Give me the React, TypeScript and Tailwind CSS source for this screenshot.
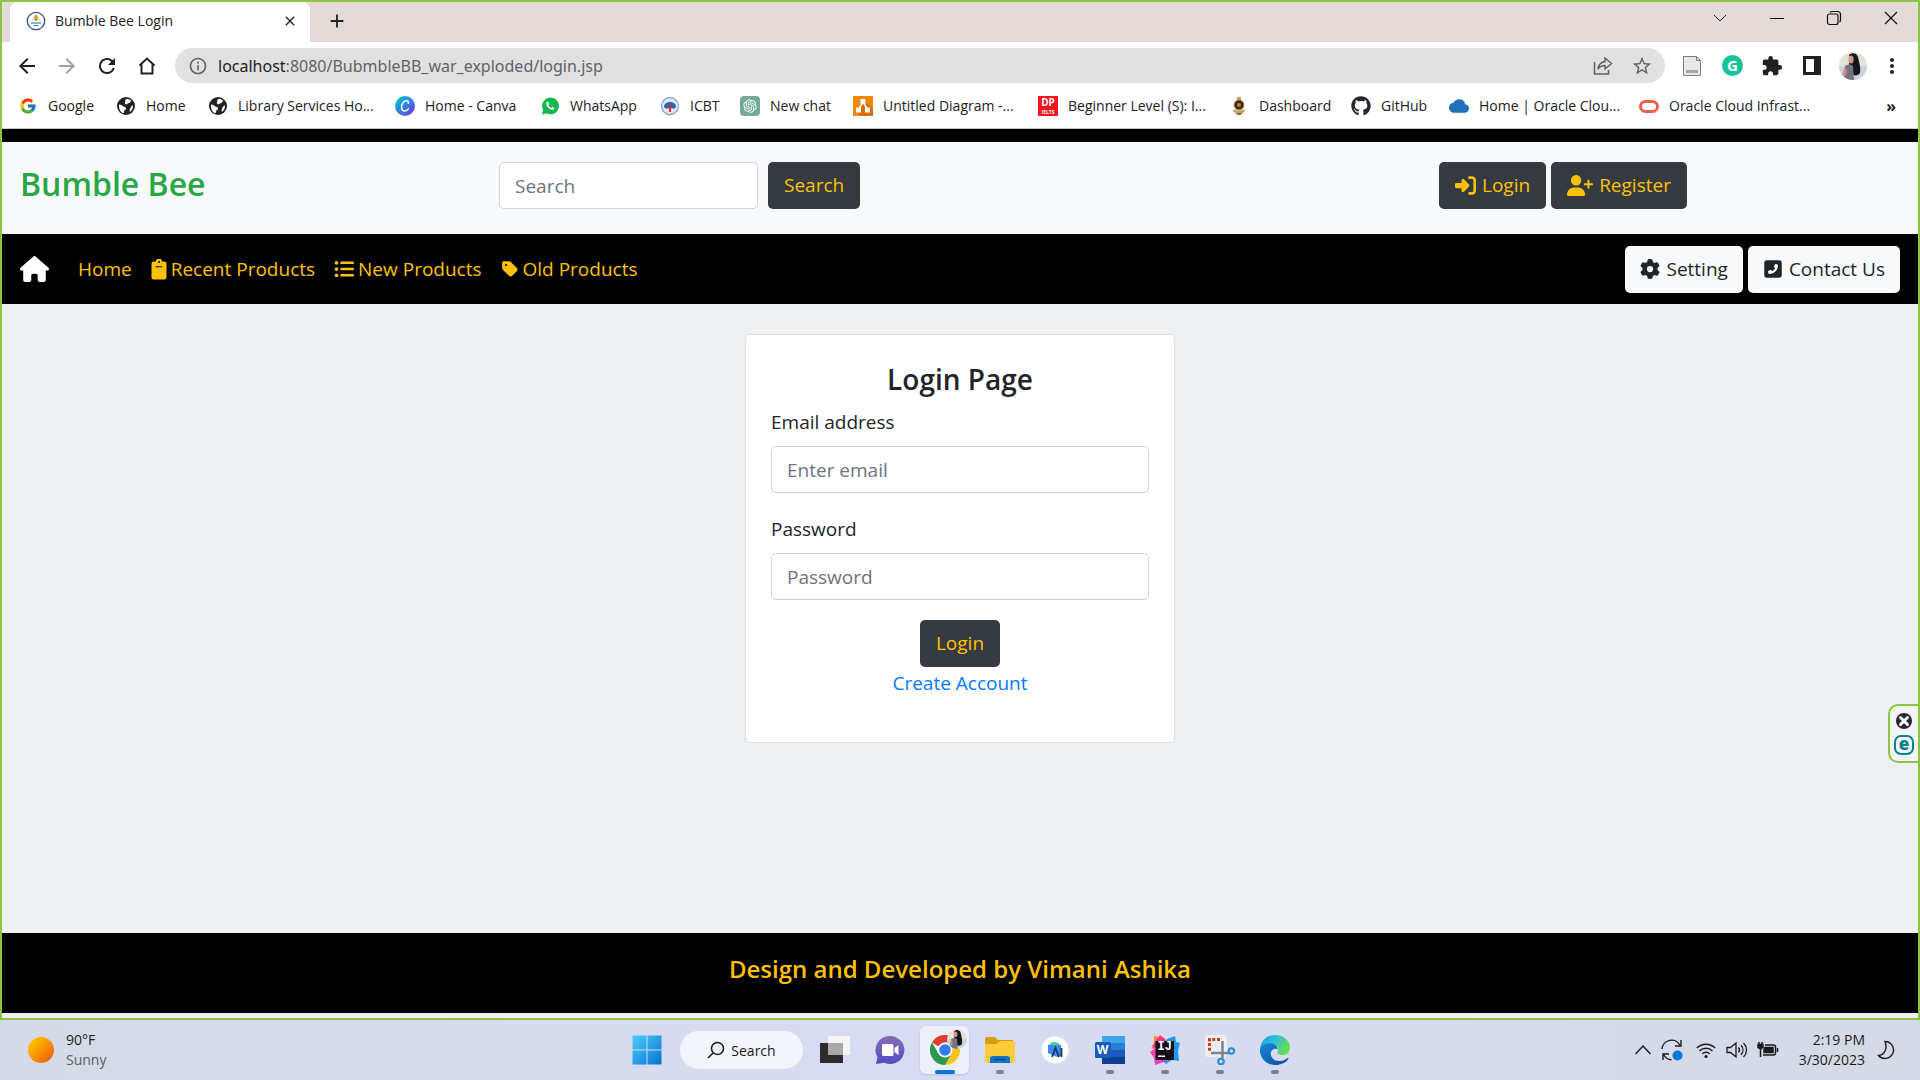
import React, { ReactNode } from "react";
import { FcGoogle } from "react-icons/fc";
import { FaHouse, FaRightToBracket, FaUserPlus, FaGear, FaSquarePhoneFlip, FaTag, FaListUl, FaGithub } from "react-icons/fa6";
import { MdArrowBack, MdArrowForward, MdRefresh, MdExtension, MdStarOutline, MdMoreVert, MdInfoOutline, MdCloud, MdClose, MdAdd } from "react-icons/md";
import { RiOpenaiFill } from "react-icons/ri";

function BeeIcon() {
  return (
    <svg viewBox="0 0 20 20" className="size-5 shrink-0">
      <circle cx="10" cy="10" r="8.7" fill="#fff" stroke="#3c4a78" strokeWidth="1.3" />
      <ellipse cx="10" cy="7" rx="1.8" ry="3.2" fill="#c9a227" />
      <path d="M5.5 9.5 9 7M14.5 9.5 11 7" stroke="#b9c3a0" />
      <path d="M5 12h10" stroke="#20b0b8" strokeWidth="1.4" />
      <path d="M7.5 14.5h5" stroke="#3c4a78" strokeWidth=".8" />
    </svg>
  );
}

function GlobeIcon() {
  return (
    <svg viewBox="0 0 20 20" className="size-5">
      <circle cx="10" cy="10" r="9" fill="#202124" />
      <path d="M3 8.5c2 .2 3 .8 4 1.8 1.200.8 2.500.5 3 1.700.4 1.300-.8 2-1.600 2.600-.5.700-.2 1.900-.9 2.700C4.700 16.500 2.700 13.500 3 8.500z" fill="#fff" />
      <path d="M9.500 3.500c2-1 4.500-.2 6 1.500-1 .2-1.500.8-1.500 1.700-.8.500-2 .2-2.500 1-.6.900-2.300.7-2.600-.4C8.700 6 9.700 5 9.500 3.500zM16.800 9c.6 3-.8 5.800-3 7 .2-1.500-.6-2.200.2-3.400.800-1 1.300-2.700 2.800-3.600z" fill="#fff" />
    </svg>
  );
}

function CanvaIcon() {
  return (
    <svg viewBox="0 0 20 20" className="size-5">
      <defs>
        <linearGradient id="canva" x1="0" y1="0" x2="1" y2="1">
          <stop offset="0.1" stopColor="#00c4cc" />
          <stop offset="0.55" stopColor="#3a78e6" />
          <stop offset="1" stopColor="#7d2ae8" />
        </linearGradient>
      </defs>
      <circle cx="10" cy="10" r="10" fill="url(#canva)" />
      <path d="M13.300 7.200c.6-1.700-.5-2.800-2.200-2.500-2.600.5-4.500 3.400-4.500 6.200 0 2.600 1.300 4.100 3.200 4.100 1.500 0 2.900-.9 3.700-2.300" fill="none" stroke="#fff" strokeWidth="1.500" strokeLinecap="round" />
    </svg>
  );
}

function WhatsAppIcon() {
  return (
    <svg viewBox="0 0 20 20" className="size-5">
      <path d="M2 18.500 3.200 14A8.400 8.400 0 1 1 6.500 17.300z" fill="#12b84b" />
      <path d="M7.400 5.500c-1 .4-1.500 1.500-1.200 2.700.7 2.700 2.900 4.900 5.700 5.600 1.300.3 2.500-.5 2.600-1.800l-2.200-1.200-1 1.100c-1.400-.6-2.400-1.600-3-3l.9-1-1-2.300z" fill="#fff" />
    </svg>
  );
}

function IcbtIcon() {
  return (
    <svg viewBox="0 0 20 20" className="size-5">
      <circle cx="10" cy="10" r="8.500" fill="#dfe8f3" stroke="#8fa6c4" strokeWidth="1.300" />
      <path d="M4 11c0-3.500 3-5 6-5s6 1.500 6 5l-2 2-2-1-2 1-2-1-2 1z" fill="#2867b5" />
      <path d="M7.500 9.500h5V12h-1.500v4H9v-4H7.500z" fill="#cf2936" />
    </svg>
  );
}

function DiagramIcon() {
  return (
    <svg viewBox="0 0 20 20" className="size-5">
      <path d="M0 0h20v20H0z" fill="#f08705" />
      <path d="m11 5 9 8v7H8l-5-4z" fill="#df6c0c" />
      <path d="M10 6 5.500 13.500M10 6l4.500 7.500" stroke="#fff" strokeWidth="1.500" />
      <path d="M7.500 3h5v5h-5zM3 11.500h5v5H3zM12 11.500h5v5h-5z" fill="#fff" />
    </svg>
  );
}

function CrestIcon() {
  return (
    <svg viewBox="0 0 20 20" className="size-5">
      <path d="M8 1h4v4H8zM5 13c2 2 8 2 10 0l1 2-3 3H7l-3-3z" fill="#c3a35c" />
      <circle cx="10" cy="9" r="4.800" fill="#42231b" stroke="#8f7448" />
      <circle cx="10" cy="9" r="2" fill="#b8862a" />
      <path d="M8 17h4v2H8z" fill="#7a6a50" />
    </svg>
  );
}

const bookmarks: { label: string; width: string; icon: ReactNode }[] = [
  { label: "Google", width: "w-[98px]", icon: <FcGoogle className="size-[18px]" /> },
  { label: "Home", width: "w-[92px]", icon: <GlobeIcon /> },
  { label: "Library Services Ho...", width: "w-[187px]", icon: <GlobeIcon /> },
  { label: "Home - Canva", width: "w-[145px]", icon: <CanvaIcon /> },
  { label: "WhatsApp", width: "w-[120px]", icon: <WhatsAppIcon /> },
  { label: "ICBT", width: "w-[80px]", icon: <IcbtIcon /> },
  {
    label: "New chat", width: "w-[113px]",
    icon: <span className="flex size-5 items-center justify-center rounded-sm bg-[#75a99c] text-white"><RiOpenaiFill className="size-4" /></span>,
  },
  { label: "Untitled Diagram -...", width: "w-[185px]", icon: <DiagramIcon /> },
  {
    label: "Beginner Level (S): I...", width: "w-[191px]",
    icon: (
      <span className="flex size-5 flex-col items-center justify-between bg-[#f5141b] font-bold text-white">
        <span className="text-[10px] leading-[12px]">DP</span>
        <span className="text-[5px] leading-[7px]">IELTS</span>
      </span>
    ),
  },
  { label: "Dashboard", width: "w-[122px]", icon: <CrestIcon /> },
  { label: "GitHub", width: "w-[98px]", icon: <FaGithub className="size-5 text-[#24292f]" /> },
  { label: "Home | Oracle Clou...", width: "w-[190px]", icon: <MdCloud className="size-5 text-[#2272b9]" /> },
  {
    label: "Oracle Cloud Infrast...", width: "w-[180px]",
    icon: <span className="h-[13px] w-5 rounded-full border-[3px] border-[#ee5f4b]" />,
  },
];

function Portrait({ className }: { className: string }) {
  return (
    <svg viewBox="0 0 28 28" className={className}>
      <defs>
        <clipPath id="face"><circle cx="14" cy="14" r="14" /></clipPath>
      </defs>
      <g clipPath="url(#face)">
        <path d="M0 0h28v28H0z" fill="#e4e2d6" />
        <path d="M0 14h28v14H0z" fill="#c8d5da" />
        <path d="M10 3c3-3 8-2 9 2 1 5 3 10 2 16-2 3-6 3-8 1L10 12z" fill="#16151b" />
        <path d="M6 14c3-2 6-2 8 0l1 14H4z" fill="#73747f" />
        <ellipse cx="12" cy="7.500" rx="2.600" ry="4" fill="#cf9a86" />
        <path d="m6 15-3 8 3 2 2-6z" fill="#c98f7b" />
      </g>
    </svg>
  );
}

function TabStrip() {
  return (
    <div className="flex h-10 items-start justify-between bg-[#e4dbd9]">
      <div className="flex h-full items-center pb-[2px]">
        <div className="mb-[-2px] ml-2 flex h-10 w-[300px] items-center rounded-t-lg bg-white pr-2 pb-[3px] pl-4">
          <BeeIcon />
          <span className="ml-[9px] grow text-[14px] text-[#202124]">Bumble Bee Login</span>
          <button aria-label="Close tab" className="p-1"><MdClose className="size-4 text-[#202124]" /></button>
        </div>
        <button aria-label="New tab" className="ml-4"><MdAdd className="size-[22px] text-[#202124]" /></button>
      </div>
      <div className="flex h-8 items-center gap-[37px] pr-[17px]">
        <button aria-label="Search tabs">
          <svg viewBox="0 0 20 20" className="size-5" fill="none" stroke="#202124"><path d="m4 7 6 6 6-6" /></svg>
        </button>
        <button aria-label="Minimize">
          <svg viewBox="0 0 20 20" className="size-5" stroke="#111"><path d="M3 10.500h14" /></svg>
        </button>
        <button aria-label="Restore">
          <svg viewBox="0 0 20 20" className="size-5" fill="none" stroke="#111" strokeWidth="1.200"><rect x="3.500" y="6" width="10.500" height="10.500" rx="2" /><path d="M6 4.500c.5-.7 1-1 2-1h5.500c2 0 3 1 3 3V12c0 1-.3 1.500-1 2" /></svg>
        </button>
        <button aria-label="Close">
          <svg viewBox="0 0 20 20" className="size-5" stroke="#111" strokeWidth="1.200"><path d="m4 4 12 12M16 4 4 16" /></svg>
        </button>
      </div>
    </div>
  );
}

function Toolbar() {
  return (
    <div className="flex h-[47px] items-center pr-[14px] pl-[13px] text-[#202124]">
      <div className="flex w-40 items-center gap-4">
        <button aria-label="Back"><MdArrowBack className="size-6" /></button>
        <button aria-label="Forward"><MdArrowForward className="size-6 text-[#a0a1a3]" /></button>
        <button aria-label="Reload"><MdRefresh className="size-6" /></button>
        <button aria-label="Home page">
          <svg viewBox="0 0 24 24" className="size-6" fill="none" stroke="currentColor" strokeWidth="2"><path d="M4.500 11.500 12 4.500l7.500 7M6.500 10.500V19.500h11V10.500" /></svg>
        </button>
      </div>
      <div className="flex h-[35px] grow items-center rounded-full bg-[#e1e1e1] pr-3 pl-[13px]">
        <MdInfoOutline className="size-5 text-[#5f6368]" />
        <span className="ml-[10px] grow font-['Noto_Sans','Open_Sans',sans-serif] text-[16px] text-[#5f6368]"><span className="text-[#202124]">localhost</span>:8080/BubmbleBB_war_exploded/login.jsp</span>
        <button aria-label="Share">
          <svg viewBox="0 0 22 22" className="size-[22px]" fill="none" stroke="#5f6368" strokeWidth="1.500"><path d="M2.500 7v12h14v-4M13 3l6.500 5.500L13 14v-3.500c-3 0-5 .8-7 3.500.7-4.500 3-7 7-7.500z" /></svg>
        </button>
        <button aria-label="Bookmark" className="ml-[17px]"><MdStarOutline className="size-[22px] text-[#5f6368]" /></button>
      </div>
      <div className="ml-4 flex items-center">
        <button aria-label="Document extension" className="mr-[19px]">
          <svg viewBox="0 0 22 22" className="size-[22px]"><path d="M2.500 1.500h13l4 4v15h-17z" fill="#e8e8e8" stroke="#7c7c7c" /><path d="M15.500 1.500v4h4" fill="none" stroke="#7c7c7c" /><path d="M5 15h12v3H5z" fill="#a8a8a8" /></svg>
        </button>
        <button aria-label="Grammarly" className="mr-[18px] size-[21px] rounded-full bg-[#15c39a] text-[15px] leading-[21px] font-bold text-white">G</button>
        <button aria-label="Extensions" className="mr-5"><MdExtension className="size-[22px]" /></button>
        <button aria-label="Side panel" className="mr-[18px] h-[19px] w-[18px] border-[3px] border-r-[7px] border-[#202124]" />
        <button aria-label="Profile" className="mr-[13px]"><Portrait className="size-7" /></button>
        <button aria-label="Menu"><MdMoreVert className="size-6" /></button>
      </div>
    </div>
  );
}

function Bookmarks() {
  return (
    <nav aria-label="Bookmarks" className="flex h-10 items-start border-b border-[#c8c8c8] pt-[7px] pl-4 text-[14px] leading-5 text-[#202124]">
      {bookmarks.map((b, i) => (
        <a key={i} href="#" className={`flex shrink-0 items-center gap-[10px] whitespace-nowrap ${b.width}`}>
          <span className="flex size-5 shrink-0 items-center justify-center">{b.icon}</span>
          {b.label}
        </a>
      ))}
      <button aria-label="More bookmarks" className="mr-[22px] ml-auto text-[16px] leading-5 font-bold">»</button>
    </nav>
  );
}

const darkButton = "flex h-[47px] items-center gap-[6px] rounded-[5px] bg-[#343a40] px-4 text-[19px] text-[#ffc107]";
const lightButton = "flex h-[47px] items-center gap-[6px] rounded-[5px] bg-[#f8f9fa] px-[15px] text-[19px] text-[#212529]";
const textBox = "h-[47px] rounded-[5px] border border-[#ced4da] bg-white px-[15px] text-[19px] text-[#495057] placeholder:text-[#6c757d]";

function ClipboardIcon() {
  return (
    <svg viewBox="0 0 16 21" className="h-[21px] w-4">
      <path d="M2.500 2.500H5a3 3 0 0 1 6 0h2.500A2 2 0 0 1 15.500 4.500v14a2 2 0 0 1-2 2h-11a2 2 0 0 1-2-2v-14a2 2 0 0 1 2-2z" fill="#ffc107" />
      <circle cx="8" cy="3" r="1" fill="#000" />
      <path d="M5 7.800h6" stroke="#000" strokeLinecap="round" />
    </svg>
  );
}

function SitePage() {
  return (
    <div className="flex grow flex-col bg-[#eff0f2]">
      <div className="h-[13px] bg-black" />
      <header className="flex h-[92px] items-start bg-[#f8f9fb] pt-5">
        <div className="w-1/4 pl-[18px]"><h3 className="text-[32px] leading-[44px] font-semibold text-[#28a745]">Bumble Bee</h3></div>
        <form className="flex w-1/2 gap-[10px] pl-[18px]">
          <input type="search" aria-label="Search" placeholder="Search" className={`w-[259px] ${textBox}`} />
          <button type="button" className={darkButton}>Search</button>
        </form>
        <div className="flex gap-[5px]">
          <a href="#" className={darkButton}><FaRightToBracket className="size-[21px]" />Login</a>
          <a href="#" className={darkButton}><FaUserPlus className="h-[21px] w-[26px]" />Register</a>
        </div>
      </header>
      <nav aria-label="Site" className="flex h-[70px] items-center bg-black pr-[18px] pl-[18px] text-[19px] text-[#ffc107]">
        <a href="#" aria-label="Start"><FaHouse className="h-[26px] w-[29px] text-white" /></a>
        <ul className="ml-[29px] flex gap-[19px]">
          <li><a href="#">Home</a></li>
          <li><a href="#" className="flex items-center gap-1"><ClipboardIcon />Recent Products</a></li>
          <li><a href="#" className="flex items-center gap-1"><FaListUl className="size-5" />New Products</a></li>
          <li><a href="#" className="flex items-center gap-1"><FaTag className="size-[18px]" />Old Products</a></li>
        </ul>
        <div className="ml-auto flex gap-[5px]">
          <button className={lightButton}><FaGear className="size-5" />Setting</button>
          <button className={lightButton}><FaSquarePhoneFlip className="size-5" />Contact Us</button>
        </div>
      </nav>
      <main className="flex grow justify-center pt-[30px]">
        <form className="flex h-[409px] w-[430px] flex-col self-start rounded-[5px] border border-[#dfdfdf] bg-white px-[25px] pt-[25px] text-[19px] text-[#212529]">
          <h4 className="mb-[10px] text-center text-[28px] leading-[38px] font-semibold">Login Page</h4>
          <label htmlFor="email" className="mb-[9px] leading-[29px]">Email address</label>
          <input id="email" type="email" placeholder="Enter email" className={textBox} />
          <label htmlFor="password" className="mt-[22px] mb-[9px] leading-[29px]">Password</label>
          <input id="password" type="password" placeholder="Password" className={textBox} />
          <div className="mt-5 flex flex-col items-center">
            <button type="button" className={darkButton}>Login</button>
            <a href="#" className="leading-8 text-[#007bff]">Create Account</a>
          </div>
        </form>
      </main>
      <footer className="mb-[5px] h-20 bg-black pt-[18px] text-center text-[24px] leading-9 font-semibold text-[#ffc107]">
        Design and Developed by Vimani Ashika
      </footer>
    </div>
  );
}

function SideWidget() {
  return (
    <div className="absolute top-[702px] -right-[2px] flex h-[59px] w-8 flex-col items-center gap-[5px] rounded-l-[10px] border-2 border-[#8cc640] bg-[#f3f4f5] pt-[6px]">
      <button aria-label="Dismiss">
        <svg viewBox="0 0 18 18" className="size-[18px]"><circle cx="9" cy="9" r="8" fill="#23282e" /><path d="m5.500 5.500 7 7M12.500 5.500l-7 7" stroke="#fff" strokeWidth="3" strokeLinecap="round" /></svg>
      </button>
      <button aria-label="Open assistant" className="flex size-5 items-center justify-center rounded-[7px] border-2 border-[#0b8290] text-[17px] leading-4 font-extrabold text-[#0b8290]"><span className="mb-[3px]">e</span></button>
    </div>
  );
}

function WindowsLogo() {
  return (
    <svg viewBox="0 0 30 30" className="size-[30px]">
      <defs><linearGradient id="win" gradientUnits="userSpaceOnUse" x1="0" y1="0" x2="30" y2="30"><stop stopColor="#4cd0fb" /><stop offset="1" stopColor="#0473d0" /></linearGradient></defs>
      <path d="M.5.5h14v14H.5zM15.500.5h14v14h-14zM.5 15.500h14v14H.5zM15.500 15.500h14v14h-14z" fill="url(#win)" />
    </svg>
  );
}

function TaskViewIcon() {
  return (
    <svg viewBox="0 0 30 30" className="size-[30px]">
      <path d="M0 8h23v20H0z" fill="#2b2b2b" />
      <path d="M8 1h22v19H8z" fill="#f5f5f5" />
      <path d="M8 8h15v12H8z" fill="#aaa" />
    </svg>
  );
}

function ChatIcon() {
  return (
    <svg viewBox="0 0 30 30" className="size-[30px]">
      <defs><linearGradient id="chat" x1="0" y1="0" x2="0" y2="1"><stop stopColor="#8a6bb8" /><stop offset="1" stopColor="#4d4fc4" /></linearGradient></defs>
      <path d="M15.500 1a14 14 0 1 1-6 26.700L1 29l1.500-7A14 14 0 0 1 15.500 1z" fill="url(#chat)" />
      <rect x="7" y="9" width="11.500" height="12" rx="1.500" fill="#fff" />
      <path d="m19.500 13 4-3v10l-4-3z" fill="#fff" />
    </svg>
  );
}

function ChromeIcon() {
  return (
    <svg viewBox="0 0 30 30" className="size-[30px]">
      <path d="M15 15 2 7.500A15 15 0 0 1 28 7.500H15z" fill="#e33b2e" />
      <path d="M15 7.500h13A15 15 0 0 1 15 30l6.500-11.200z" fill="#fcc31e" />
      <path d="M2 7.500A15 15 0 0 0 15 30l6.500-11.200L8.500 18.800z" fill="#269a4a" />
      <circle cx="15" cy="15" r="7.500" fill="#fff" />
      <circle cx="15" cy="15" r="5.800" fill="#2f7ded" />
    </svg>
  );
}

function FolderIcon() {
  return (
    <svg viewBox="0 0 30 30" className="size-[30px]">
      <path d="M0 4a2 2 0 0 1 2-2h8l3 3h15v6H0z" fill="#dc9a12" />
      <path d="M0 9h11l4-3h13a2 2 0 0 1 2 2v18a2 2 0 0 1-2 2H2a2 2 0 0 1-2-2z" fill="#fccc3e" />
      <path d="M5 28v-4a3 3 0 0 1 3-3h14a3 3 0 0 1 3 3v4z" fill="#1475c2" />
      <path d="M9 24.500h12" stroke="#0a4b85" strokeWidth="1.500" />
    </svg>
  );
}

function AndroidStudioIcon() {
  return (
    <svg viewBox="0 0 30 30" className="size-[30px]">
      <circle cx="15" cy="15" r="13.500" fill="#fff" />
      <path d="M9 10a6 5 0 0 1 11 0z" fill="#3ddc84" />
      <path d="M8 10h13v11l-4 1L8 18z" fill="#4285f4" />
      <path d="m12 22 3.500-9 3.500 9M21.500 13v9" stroke="#123b58" strokeWidth="1.800" fill="none" />
    </svg>
  );
}

function WordIcon() {
  return (
    <span className="relative block size-[30px]">
      <svg viewBox="0 0 30 30" className="size-[30px]">
        <path d="M7 1h23v7H7z" fill="#41a5ee" /><path d="M7 8h23v7H7z" fill="#2b7cd3" /><path d="M7 15h23v7H7z" fill="#185abd" /><path d="M7 22h23v7H7z" fill="#103f91" />
        <rect x="0" y="7" width="16" height="16" rx="1.500" fill="#185abd" />
      </svg>
      <span className="absolute top-[7px] left-0 w-4 text-center text-[12px] leading-4 font-bold text-white">W</span>
    </span>
  );
}

function IntelliJIcon() {
  return (
    <span className="relative block size-[30px]">
      <svg viewBox="0 0 30 30" className="size-[30px]">
        <path d="m4 1 11 2-3 13-11-3 3-3z" fill="#fc8a2d" />
        <path d="m10 0 8 7-10 9-6-5z" fill="#fb3878" />
        <path d="m17 4 8-3 1 6 4 1-2 8 1 10-7-1-6 4-8-8z" fill="#159af5" />
        <path d="m0 17 7-5 6 12 4 2-12 4-1-7z" fill="#fb3fc0" />
        <path d="M5.500 6h18.500v19H5.500z" fill="#180b16" />
        <path d="M8 20.500h7v1.500H8z" fill="#fff" />
      </svg>
      <span className="absolute top-[6px] left-2 font-['Liberation_Mono'] text-[12px] leading-3 font-bold text-white">IJ</span>
    </span>
  );
}

function SnippingIcon() {
  return (
    <svg viewBox="0 0 30 30" className="size-[30px]">
      <rect x="0" y="0" width="22" height="22" rx="3" fill="#efeff0" />
      <path d="M15 4.500H4.500V17" fill="none" stroke="#cf3a1e" strokeWidth="3" strokeDasharray="3 1.700" />
      <path d="M17.500 6v17M6 18h18" stroke="#7b8590" strokeWidth="2.500" />
      <circle cx="26.500" cy="16" r="2.800" fill="none" stroke="#1e90d6" strokeWidth="2" />
      <circle cx="16" cy="26.500" r="2.800" fill="none" stroke="#1e90d6" strokeWidth="2" />
    </svg>
  );
}

function EdgeIcon() {
  return (
    <svg viewBox="0 0 30 30" className="size-[30px]">
      <defs>
        <linearGradient id="edgeTop" x1="0" y1="0" x2="1" y2=".4"><stop stopColor="#1b9de2" /><stop offset=".55" stopColor="#2fc2d6" /><stop offset="1" stopColor="#68dc54" /></linearGradient>
        <linearGradient id="edgeLow" x1="0" y1="0" x2="1" y2="1"><stop stopColor="#1686d9" /><stop offset="1" stopColor="#0d4f9c" /></linearGradient>
      </defs>
      <path d="M0 14C1 5 7 0 15 0c9 0 15 6 15 12.500 0 5-3.500 7.500-7.500 7.500-4 0-6-1.500-5-3 2-3 .5-7-5-7C7 10 1 14 0 14z" fill="url(#edgeTop)" />
      <path d="M0 14.500C.5 11 5 8.200 9.500 8.200c5 0 8.200 2.800 8.200 6.300-1.500-1.500-5-1-6.500 2-2 4 2 10 8.800 9.500 3.500-.2 6-1.500 7.500-3 .8-.5 1.300 0 .8 1C26 27.500 21 30 15.500 30 6 30-.5 22.500 0 14.500z" fill="url(#edgeLow)" />
    </svg>
  );
}

const pinned: { name: string; icon: ReactNode; state?: "open" | "active" }[] = [
  { name: "Task view", icon: <TaskViewIcon /> },
  { name: "Chat", icon: <ChatIcon /> },
  { name: "Chrome", icon: <ChromeIcon />, state: "active" },
  { name: "File Explorer", icon: <FolderIcon />, state: "open" },
  { name: "Android Studio", icon: <AndroidStudioIcon /> },
  { name: "Word", icon: <WordIcon />, state: "open" },
  { name: "IntelliJ IDEA", icon: <IntelliJIcon />, state: "open" },
  { name: "Snipping Tool", icon: <SnippingIcon />, state: "open" },
  { name: "Edge", icon: <EdgeIcon />, state: "open" },
];

function Taskbar() {
  return (
    <div className="grid h-[60px] grid-cols-[1fr_auto_1fr] items-center bg-linear-to-r from-[#d5dbe6] via-[#d8dcf4] to-[#d5dae6] text-[14px] text-[#1b1b1d]">
      <div className="flex items-center gap-3 pl-7">
        <span className="size-[26px] rounded-full bg-linear-to-br from-[#ffd000] to-[#e85405]" />
        <div className="leading-5"><p>90°F</p><p className="text-[#5c6068]">Sunny</p></div>
      </div>
      <div className="flex items-center pl-[14px]">
        <button aria-label="Start" className="mr-[18px]"><WindowsLogo /></button>
        <button className="mr-1 flex h-[38px] w-[123px] items-center justify-center gap-[6px] rounded-full bg-[#f3f5fd]">
          <svg viewBox="0 0 18 18" className="size-[18px]" fill="none" stroke="#1b1b1d" strokeWidth="1.600"><circle cx="10.500" cy="7.500" r="6" /><path d="m6 12-5 5" /></svg>
          Search
        </button>
        {pinned.map((p) => (
          <button key={p.name} aria-label={p.name} className={`relative mx-[3px] flex h-12 w-[49px] items-center justify-center rounded-md ${p.state === "active" ? "bg-[#edf0fa] shadow-sm" : ""}`}>
            {p.icon}
            {p.name === "Chrome" && <Portrait className="absolute top-[3px] right-[2px] size-5" />}
            {p.state === "active" && <span className="absolute bottom-0 h-1 w-5 rounded-full bg-[#0078d4]" />}
            {p.state === "open" && <span className="absolute bottom-0 h-1 w-2 rounded-full bg-[#7c808b]" />}
          </button>
        ))}
      </div>
      <div className="flex items-center justify-end pr-[25px]">
        <svg viewBox="0 0 18 18" className="mr-[9px] size-[18px]" fill="none" stroke="#1b1b1d" strokeWidth="1.500"><path d="m1.500 13 7.500-8 7.500 8" /></svg>
        <svg viewBox="0 0 22 22" className="mr-[13px] size-[22px]" fill="none" stroke="#1b1b1d" strokeWidth="1.400"><path d="M1 10A9.500 9.500 0 0 1 19 6.500M20 1v6h-6M2 21v-6h6M2.500 15.500c2 3.500 5 5.200 8 5.200" /><circle cx="16.500" cy="16.500" r="5" fill="#0078d7" stroke="none" /></svg>
        <svg viewBox="0 0 20 20" className="mr-[10px] size-5" fill="none" stroke="#1b1b1d" strokeWidth="1.400"><path d="M.8 8a13 13 0 0 1 18.400 0M3.500 11a9.200 9.200 0 0 1 13 0M6.300 13.800a5.200 5.200 0 0 1 7.400 0" /><circle cx="10" cy="16.500" r="1.600" fill="#1b1b1d" stroke="none" /></svg>
        <svg viewBox="0 0 22 20" className="mr-[9px] h-5 w-[22px]" fill="none" stroke="#1b1b1d" strokeWidth="1.300"><path d="M1 7.500h3.500L10 3v14l-5.500-4.500H1zM12.500 7.500c1.300 1.500 1.300 3.500 0 5M15 5.200c2.600 2.800 2.600 6.800 0 9.600M17.500 3c4 4 4 10 0 14" /></svg>
        <svg viewBox="0 0 22 18" className="mr-5 h-[18px] w-[22px]" fill="none" stroke="#1b1b1d" strokeWidth="1.500"><path d="M8 4h8.500a2 2 0 0 1 2 2v6a2 2 0 0 1-2 2H6" /><path d="M8 6.500h8v5H7v-3z" fill="#1b1b1d" /><path d="M20.500 7v4M3.500 8v8M2 1v3M5 1v3" /><path d="M1 3.500h5v3L3.500 8 1 6.500z" fill="#1b1b1d" /></svg>
        <div className="mr-3 text-right leading-5"><p>2:19 PM</p><p>3/30/2023</p></div>
        <svg viewBox="0 0 18 20" className="h-5 w-[18px]" fill="none" stroke="#1b1b1d" strokeWidth="1.400"><path d="M8 1.500a8.500 8.500 0 1 1-6.500 14C8 15 10.500 8 8 1.500z" /></svg>
      </div>
    </div>
  );
}

export default function App() {
  return (
    <div className="flex min-h-screen flex-col font-['Open_Sans','Noto_Sans',sans-serif]">
      <div className="relative flex grow flex-col border-2 border-[#8cc640] bg-white">
        <TabStrip />
        <Toolbar />
        <Bookmarks />
        <SitePage />
        <SideWidget />
      </div>
      <Taskbar />
    </div>
  );
}
